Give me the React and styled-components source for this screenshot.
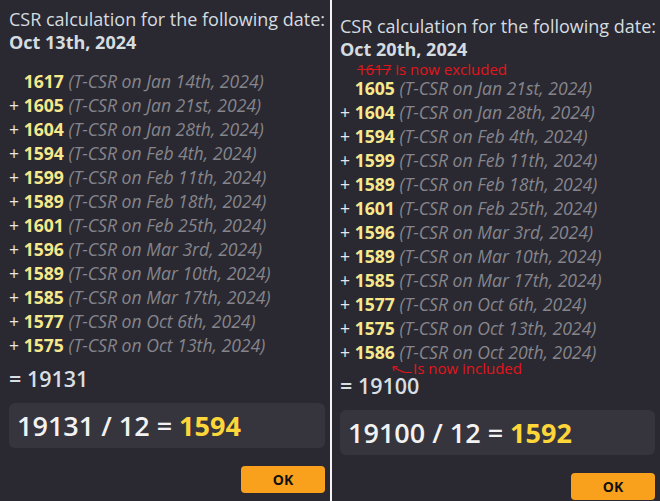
import React from "react";
import styled, { createGlobalStyle } from "styled-components";

const Global = createGlobalStyle`
    html, body { margin:0; padding:0; background:#2a2931; }
    body { font-family: "Open Sans", "DejaVu Sans", sans-serif; }
`;

const Page = styled.div`
    display:flex;
    width:660px; height:501px;
    background:#2a2931;
    overflow:hidden;
`;

const Panel = styled.div`
    width:${p => p.$w}px;
    box-sizing:border-box;
    padding:${p => p.$top}px 5px 0 ${p => p.$left}px;
    display:flex;
    flex-direction:column;
`;

const Divider = styled.div`
    width:2px;
    background:#f4f4f4;
`;

const Title = styled.div`
    font-size:18px;
    line-height:23px;
    color:#d5dce0;
    white-space:nowrap;
`;

const DateLine = styled(Title)`
    font-weight:700;
`;

const List = styled.div`
    position:relative;
    margin-top:15px;
`;

const Row = styled.div`
    font-size:17.6px;
    line-height:24px;
    white-space:nowrap;
    color:#e8e8e8;
`;

const Plus = styled.span`
    visibility:${p => (p.$hidden ? "hidden" : "visible")};
`;

const Num = styled.span`
    font-weight:700;
    color:#f6e88c;
`;

const Note = styled.span`
    font-style:italic;
    color:#86858c;
`;

const Annot = styled.div`
    position:absolute;
    left:${p => p.$x}px;
    top:${p => p.$y}px;
    font-size:15px;
    line-height:20px;
    color:#e3141a;
    white-space:nowrap;
`;

const Struck = styled.span`
    text-decoration:line-through;
    text-decoration-thickness:1px;
`;

const Arrow = styled.svg`
    position:absolute;
    left:${p => p.$x}px;
    top:${p => p.$y}px;
    overflow:visible;
`;

const Sum = styled.div`
    margin-top:8px;
    font-size:21.5px;
    line-height:28px;
    font-weight:600;
    color:#d8dee2;
`;

const ResultBox = styled.div`
    margin-top:10px;
    height:45px;
    padding:0 8px;
    display:flex;
    align-items:center;
    background:#36353d;
    border-radius:6px;
    font-size:27px;
    font-weight:600;
    color:#f2f2f2;
    white-space:pre;
`;

const Avg = styled.span`
    font-weight:700;
    color:#fdd63a;
`;

const Actions = styled.div`
    display:flex;
    justify-content:flex-end;
    margin-top:18px;
`;

const OkButton = styled.button`
    width:84px; height:27px;
    border:none;
    border-radius:4px;
    background:#f9a11c;
    color:#111;
    font-family:"Open Sans", sans-serif;
    font-size:14px;
    font-weight:700;
    padding:0;
`;

const left = [
    ["1617", "Jan 14th, 2024"],
    ["1605", "Jan 21st, 2024"],
    ["1604", "Jan 28th, 2024"],
    ["1594", "Feb 4th, 2024"],
    ["1599", "Feb 11th, 2024"],
    ["1589", "Feb 18th, 2024"],
    ["1601", "Feb 25th, 2024"],
    ["1596", "Mar 3rd, 2024"],
    ["1589", "Mar 10th, 2024"],
    ["1585", "Mar 17th, 2024"],
    ["1577", "Oct 6th, 2024"],
    ["1575", "Oct 13th, 2024"],
];

const right = [...left.slice(1), ["1586", "Oct 20th, 2024"]];

const Rows = ({ items }) =>
    items.map(([n, d], i) => (
        <Row key={i}>
            <Plus $hidden={i === 0}>+ </Plus>
            <Num>{n}</Num> <Note>(T-CSR on {d})</Note>
        </Row>
    ));

const Calc = ({ top, leftPad, width, date, items, sum, avg, children }) => (
    <Panel $w={width} $top={top} $left={leftPad}>
        <Title>CSR calculation for the following date:</Title>
        <DateLine>{date}</DateLine>
        <List>
            <Rows items={items} />
            {children}
        </List>
        <Sum>= {sum}</Sum>
        <ResultBox>
            {sum} / 12 = <Avg>{avg}</Avg>
        </ResultBox>
        <Actions>
            <OkButton>OK</OkButton>
        </Actions>
    </Panel>
);

const App = () => (
    <Page>
        <Global />
        <Calc top={8} leftPad={9} width={330} date="Oct 13th, 2024" items={left} sum="19131" avg="1594" />
        <Divider />
        <Calc top={15} leftPad={8} width={328} date="Oct 20th, 2024" items={right} sum="19100" avg="1592">
            <Annot $x={17} $y={-17}>
                <Struck>1617</Struck> is now excluded
            </Annot>
            <Arrow $x={52} $y={289} width="22" height="10" viewBox="0 0 22 10">
                <path d="M20 7.5 L14 7.5 C10 7.5 7 5.5 1.5 2" fill="none" stroke="#e3141a" strokeWidth="1.2" />
                <path d="M1 1.5 L6 1.8 M1 1.5 L2.2 6" fill="none" stroke="#e3141a" strokeWidth="1.2" />
            </Arrow>
            <Annot $x={73} $y={282}>Is now included</Annot>
        </Calc>
    </Page>
);

export default App;
